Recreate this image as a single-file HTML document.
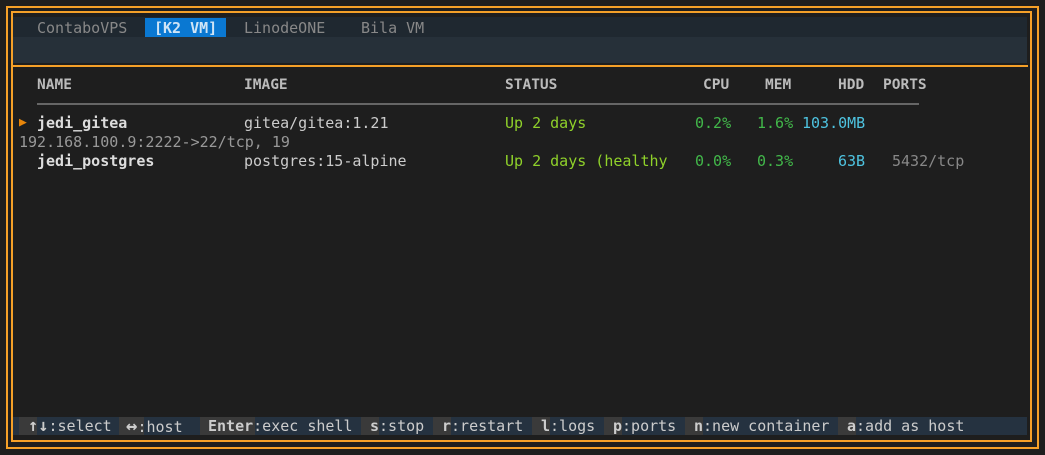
<!DOCTYPE html><html><head><style>
html,body{margin:0;padding:0;background:#1e1e1e;width:1045px;height:455px;overflow:hidden}
body{position:relative;font-family:"DejaVu Sans Mono","Liberation Mono",monospace;font-size:15px}
.b{position:absolute;border:2px solid #f5a028}
.t{position:absolute;white-space:pre;line-height:18px}
.k{position:absolute;background:#3a3a3a;height:18px;top:417px}
.h{color:#bbb;font-weight:bold;font-size:14.5px}
</style></head><body>
<div class="b" style="left:6px;top:6px;width:1029px;height:439px"></div>
<div class="b" style="left:11px;top:11px;width:1017px;height:427px"></div>
<div style="position:absolute;left:13px;top:17px;width:1014px;height:46px;background:#263039"></div>
<div style="position:absolute;left:13px;top:17px;width:1014px;height:20px;background:#1f2830"></div>
<div style="position:absolute;left:11px;top:65px;width:1017px;height:2px;background:#f5a028"></div>
<div style="position:absolute;left:145px;top:18px;width:81px;height:19px;background:#0a78d2"></div>
<div class="t" style="left:37px;top:19px;color:#888">ContaboVPS</div>
<div class="t" style="left:154px;top:19px;color:#cfe4f6;font-weight:bold">[K2 VM]</div>
<div class="t" style="left:244px;top:19px;color:#888">LinodeONE</div>
<div class="t" style="left:361px;top:19px;color:#888">Bila VM</div>

<div class="t h" style="left:37px;top:76px">NAME</div>
<div class="t h" style="left:244px;top:76px">IMAGE</div>
<div class="t h" style="left:505px;top:76px">STATUS</div>
<div class="t h" style="left:703px;top:76px">CPU</div>
<div class="t h" style="left:765px;top:76px">MEM</div>
<div class="t h" style="left:838px;top:76px">HDD</div>
<div class="t h" style="left:883px;top:76px">PORTS</div>
<div style="position:absolute;left:37px;top:103px;width:882px;height:2px;background:#666"></div>

<div class="t" style="left:19px;top:114px;color:#e8860a;font-size:13px">▶</div>
<div class="t" style="left:37px;top:114px;color:#ddd;font-weight:bold">jedi_gitea</div>
<div class="t" style="left:244px;top:114px;color:#ccc">gitea/gitea:1.21</div>
<div class="t" style="left:505px;top:114px;color:#8fd12a">Up 2 days</div>
<div class="t" style="left:695px;top:114px;color:#42b84a">0.2%</div>
<div class="t" style="left:757px;top:114px;color:#42b84a">1.6%</div>
<div class="t" style="left:802px;top:114px;color:#4ec3e0">103.0MB</div>
<div class="t" style="left:19px;top:133px;color:#999">192.168.100.9:2222-&gt;22/tcp, 19</div>
<div class="t" style="left:37px;top:152px;color:#ddd;font-weight:bold">jedi_postgres</div>
<div class="t" style="left:244px;top:152px;color:#ccc">postgres:15-alpine</div>
<div class="t" style="left:505px;top:152px;color:#8fd12a">Up 2 days (healthy</div>
<div class="t" style="left:695px;top:152px;color:#42b84a">0.0%</div>
<div class="t" style="left:757px;top:152px;color:#42b84a">0.3%</div>
<div class="t" style="left:838px;top:152px;color:#4ec3e0">63B</div>
<div class="t" style="left:892px;top:152px;color:#888">5432/tcp</div>

<div style="position:absolute;left:13px;top:417px;width:1014px;height:18px;background:#253240"></div>
<div class="k" style="left:19px;width:18px"></div>
<div class="k" style="left:119px;width:25px"></div>
<div class="k" style="left:200px;width:55px"></div>
<div class="k" style="left:361px;width:18px"></div>
<div class="k" style="left:433px;width:18px"></div>
<div class="k" style="left:532px;width:18px"></div>
<div class="k" style="left:604px;width:18px"></div>
<div class="k" style="left:685px;width:18px"></div>
<div class="k" style="left:838px;width:18px"></div>
<div class="t" style="left:28px;top:417px;color:#ccc"><b style="font-size:17px">↑↓</b>:select</div>
<div class="t" style="left:126px;top:417px;color:#ccc"><b style="font-size:19px">↔</b>:host</div>
<div class="t" style="left:208px;top:417px;color:#ccc"><b>Enter</b>:exec shell</div>
<div class="t" style="left:370px;top:417px;color:#ccc"><b>s</b>:stop</div>
<div class="t" style="left:442px;top:417px;color:#ccc"><b>r</b>:restart</div>
<div class="t" style="left:541px;top:417px;color:#ccc"><b>l</b>:logs</div>
<div class="t" style="left:613px;top:417px;color:#ccc"><b>p</b>:ports</div>
<div class="t" style="left:694px;top:417px;color:#ccc"><b>n</b>:new container</div>
<div class="t" style="left:847px;top:417px;color:#ccc"><b>a</b>:add as host</div>
</body></html>
